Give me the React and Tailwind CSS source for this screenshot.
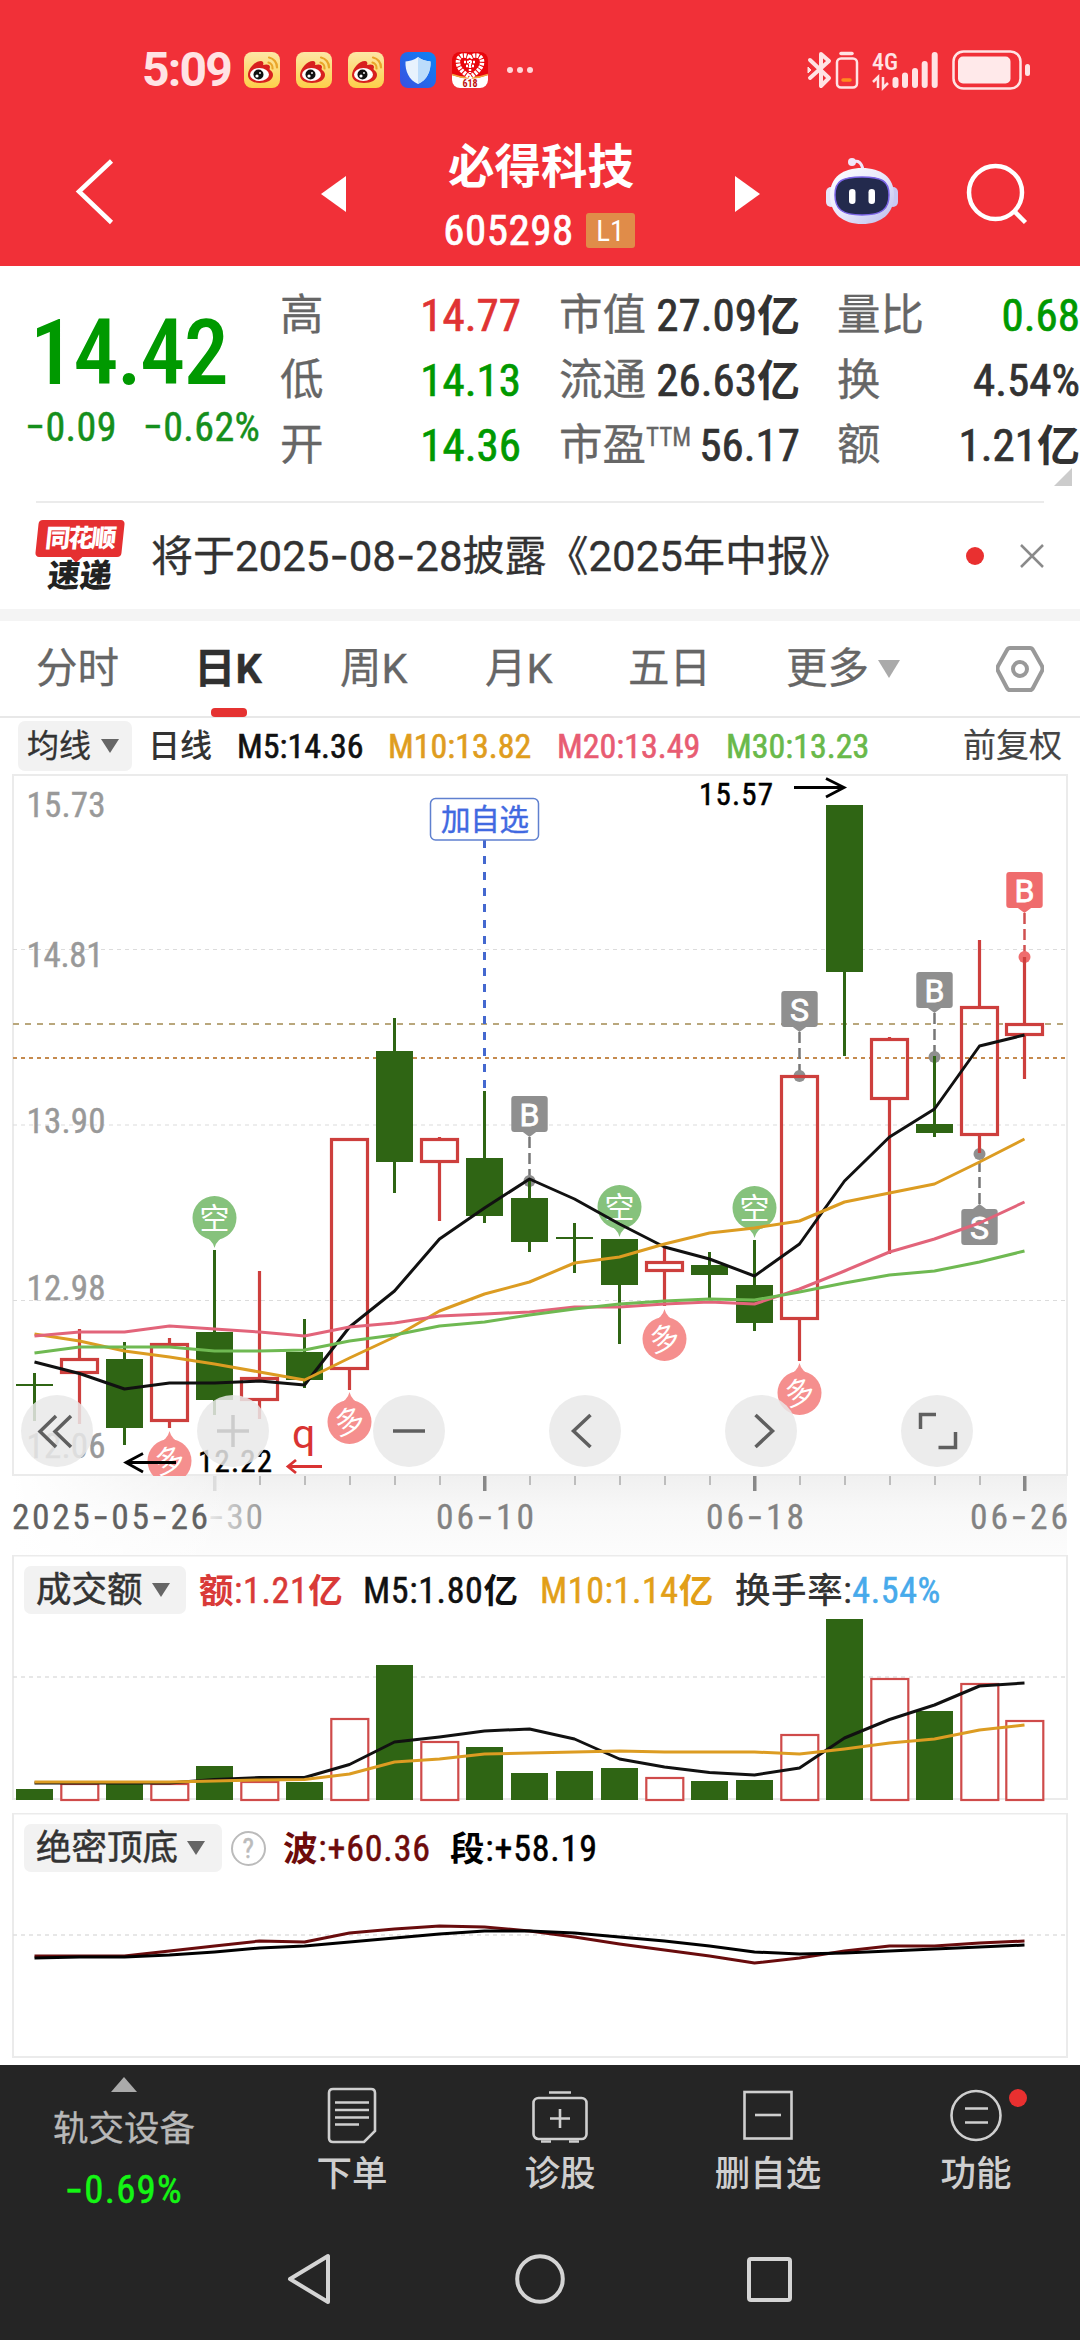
import React from 'react';

const GREEN = '#2f6514';
const RED = '#cd3f3d';

// x centre of the n-th trading day
const cx = (i) => 34.5 + i * 45;
const toPoints = (ys) => ys.map((y, i) => `${cx(i)},${y}`).join(' ');

// [direction, high, bodyTop, bodyBottom, low]
const candles = [
  ['down', 1373, 1384, 1386, 1421],
  ['up', 1329, 1358, 1374, 1424],
  ['down', 1342, 1359, 1428, 1445],
  ['up', 1338, 1343, 1422, 1428],
  ['down', 1250, 1332, 1400, 1415],
  ['up', 1271, 1377, 1401, 1419],
  ['down', 1319, 1352, 1380, 1388],
  ['up', 1138, 1138, 1370, 1390],
  ['down', 1018, 1051, 1162, 1193],
  ['up', 1137, 1138, 1163, 1221],
  ['down', 1091, 1158, 1216, 1223],
  ['down', 1180, 1198, 1242, 1252],
  ['down', 1223, 1237, 1239, 1273],
  ['down', 1239, 1239, 1285, 1344],
  ['up', 1247, 1261, 1272, 1306],
  ['down', 1252, 1265, 1275, 1300],
  ['down', 1240, 1285, 1323, 1331],
  ['up', 1075, 1075, 1320, 1361],
  ['down', 805, 805, 972, 1056],
  ['up', 1037, 1038, 1100, 1254],
  ['down', 1056, 1124, 1133, 1137],
  ['up', 940, 1006, 1136, 1153],
  ['up', 957, 1023, 1036, 1079],
];

const ma5 = [1362, 1373.5, 1389, 1383, 1383, 1381, 1385, 1327, 1291, 1239, 1208, 1179, 1199, 1224, 1247, 1259, 1276, 1244, 1181, 1137, 1109, 1046, 1035];
const ma10 = [1334, 1341, 1351, 1357, 1364, 1372, 1380, 1358, 1337, 1311, 1294, 1282, 1263, 1257, 1244, 1233, 1228, 1221, 1202, 1193, 1184, 1162, 1139];
const ma20 = [1336, 1332, 1332, 1326, 1329, 1332, 1336, 1327, 1323, 1316, 1314, 1312, 1307, 1307, 1304, 1302, 1304, 1289, 1271, 1252, 1239, 1223, 1202];
const ma30 = [1353, 1347, 1347, 1347, 1351, 1351, 1350, 1341, 1335, 1326, 1322, 1315, 1309, 1304, 1301, 1299, 1300, 1292, 1283, 1275, 1271, 1262, 1251];

const volumes = [1789, 1783, 1783, 1783, 1766, 1781, 1782, 1718, 1665, 1741, 1747, 1773, 1771, 1768, 1777, 1781, 1780, 1734, 1619, 1678, 1711, 1683, 1720];
const volMa5 = [1783, 1783, 1783, 1783, 1779.5, 1777.5, 1777.5, 1764.5, 1742, 1737, 1731, 1729, 1739, 1759, 1767, 1772.5, 1775, 1768, 1738, 1719.5, 1705, 1686, 1683];
const volMa10 = [1782, 1782, 1782, 1782, 1781, 1780, 1779.5, 1774, 1762, 1759, 1754, 1753, 1752, 1751, 1752, 1752, 1752, 1754, 1749, 1743, 1739, 1730, 1725];

const wave = [1956, 1956, 1956, 1951, 1946, 1941, 1942, 1933, 1929, 1926, 1927, 1931, 1937, 1944, 1950, 1956, 1963, 1958, 1951, 1946, 1946, 1943, 1941];
const segment = [1958, 1957, 1957, 1955, 1952, 1948, 1946, 1942, 1938, 1934, 1931, 1931, 1933, 1937, 1941, 1946, 1952, 1954, 1953, 1951, 1949, 1947, 1945];

const priceLabels = [
  { text: '15.73', y: 817, w: 77 },
  { text: '14.81', y: 967, w: 75 },
  { text: '13.90', y: 1133, w: 77 },
  { text: '12.98', y: 1300, w: 77 },
  { text: '12.06', y: 1458, w: 77 },
];

// Roboto's hyphen is very short, Inter's is about as wide as a digit
const wideDash = (text, Tag = 'span') =>
  text.split(/(-)/).map((part, i) => (part === '-' ? <Tag key={i} className="[font-family:Inter]">-</Tag> : part));

/* ---------- status bar ---------- */

const WeiboIcon = () => (
  <svg className="w-9 h-9" viewBox="0 0 36 36">
    <defs>
      <linearGradient id="wb" x1="0" y1="0" x2="0" y2="1">
        <stop offset="0" stopColor="#fde7a6" />
        <stop offset="1" stopColor="#fdcf49" />
      </linearGradient>
    </defs>
    <rect width="36" height="36" rx="8" fill="url(#wb)" />
    <path d="M4 23c0-6 7-14 13-14 2 0 3 2 2 4 3-1 7-1 7 2 0 1-1 2 0 3 2 1 3 3 3 5 0 5-6 8-13 8S4 28 4 23z" fill="#d8201f" />
    <ellipse cx="15.500" cy="22.500" rx="9.500" ry="6.500" fill="#fff" />
    <circle cx="14.500" cy="22.500" r="5" fill="#111" />
    <circle cx="13" cy="24" r="1.600" fill="#fff" />
    <circle cx="16" cy="21" r="0.900" fill="#fff" />
    <path d="M24.500 10.500a5.500 5.500 0 0 1 4 6M25 5.500a10 10 0 0 1 8 10" fill="none" stroke="#e9a52a" strokeWidth="2.200" strokeLinecap="round" />
  </svg>
);

const ShieldIcon = () => (
  <svg className="w-9 h-9" viewBox="0 0 36 36">
    <defs>
      <linearGradient id="sh" x1="1" y1="0" x2="0" y2="1">
        <stop offset="0" stopColor="#0a84f5" />
        <stop offset="1" stopColor="#3b4fe0" />
      </linearGradient>
    </defs>
    <rect width="36" height="36" rx="8" fill="url(#sh)" />
    <path d="M18 5c4 3 8 4 12.500 4.500C31 19 27 28 18 32 9 28 5 19 5.500 9.500 10 9 14 8 18 5z" fill="#e8f2fd" />
    <path d="M18 5c4 3 8 4 12.500 4.500C31 19 27 28 18 32z" fill="#bcdcfb" />
  </svg>
);

const HeartIcon = () => (
  <svg className="w-9 h-9" viewBox="0 0 36 36">
    <defs>
      <clipPath id="hc">
        <rect width="36" height="36" rx="8" />
      </clipPath>
    </defs>
    <g clipPath="url(#hc)">
      <rect width="36" height="36" fill="#e9060c" />
      <path d="M0 23q18 7 36 0v13H0z" fill="#fff" />
      <path d="M0 22.500q18 7 36 0" fill="none" stroke="#f3a33c" strokeWidth="1.500" />
      <path d="M18 6c3-4 13-4 12 5-.5 6-7 11-12 14C13 22 6.500 17 6 11 5 2 15 2 18 6z" fill="none" stroke="#fff" strokeWidth="4.500" strokeDasharray="2.500 1" />
      <path d="M12 10h12M14 14h8M18 8v13" stroke="#fff" strokeWidth="2.500" strokeDasharray="2 1" />
      <text x="18" y="34.500" textAnchor="middle" fontSize="10" fontWeight="700" fill="#c01010">618</text>
    </g>
  </svg>
);

const StatusBar = () => (
  <div className="flex items-center h-[140px] pl-[142px] pr-[50px] text-[#ffe3e4]">
    <span className="w-[102px] text-[48px] leading-none font-bold tracking-[-1.8px] font-stretch-100%">5:09</span>
    <div className="flex gap-4">
      <WeiboIcon />
      <WeiboIcon />
      <WeiboIcon />
      <ShieldIcon />
      <HeartIcon />
    </div>
    <div className="flex gap-1 ml-[19px]">
      <i className="size-[6px] rounded-full bg-[#ffd6d8]" />
      <i className="size-[6px] rounded-full bg-[#ffd6d8]" />
      <i className="size-[6px] rounded-full bg-[#ffd6d8]" />
    </div>
    <svg className="ml-auto w-[224px] h-[44px]" viewBox="806 47 224 44" fill="none" stroke="#ffe3e4">
      <path d="M810 59l19 18-8 8V53l8 7-19 17" strokeWidth="4" strokeLinejoin="round" strokeLinecap="round" />
      <path d="M808 66l3 3-3 3z" strokeWidth="1" fill="#ffe3e4" />
      <rect x="837" y="57.500" width="20" height="29" rx="4" strokeWidth="2.500" />
      <path d="M841 52.500h11" strokeWidth="3.500" strokeLinecap="round" />
      <path d="M843 79h7" stroke="#ff8a1e" strokeWidth="3.500" strokeLinecap="round" />
      <text x="872" y="69" fontSize="24" fontWeight="500" textLength="26" lengthAdjust="spacingAndGlyphs" fill="#ffe3e4" stroke="none">4G</text>
      <path d="M873 81l5-5v11M883 76v11l5-5" strokeWidth="2.500" />
      <path d="M895.500 79v5M905 74.500v9.500M915 70v14M924.700 63v21M934.700 54v30" strokeWidth="6" strokeLinecap="round" />
      <rect x="953.500" y="50.500" width="67" height="37" rx="10" strokeWidth="2.500" />
      <rect x="958" y="55.500" width="52.500" height="27" rx="5" fill="#ffe9ea" stroke="none" />
      <rect x="1025" y="63" width="5" height="12" rx="2.500" fill="#ffe3e4" stroke="none" />
    </svg>
  </div>
);

/* ---------- title bar ---------- */

const RobotIcon = () => (
  <svg className="w-[74px] h-[70px]" viewBox="824 156 74 70">
    <defs>
      <linearGradient id="rb" x1="0" y1="0" x2="1" y2="1">
        <stop offset="0" stopColor="#ffffff" />
        <stop offset="0.500" stopColor="#e9e8fb" />
        <stop offset="1" stopColor="#b9bcec" />
      </linearGradient>
    </defs>
    <path d="M852 162q8-3 10 8" fill="none" stroke="#f1e6fa" strokeWidth="3" />
    <circle cx="851" cy="162" r="4" fill="#f1e6fa" />
    <rect x="825" y="187" width="10" height="20" rx="5" fill="#e6e6fa" />
    <rect x="887" y="187" width="10" height="20" rx="5" fill="#c9c8f2" />
    <path d="M861 168c19 0 32 9 32 27 0 19-13 29-32 29s-32-10-32-29c0-18 13-27 32-27z" fill="url(#rb)" />
    <path d="M861 177c20 0 27 4 27 18s-7 20-27 20-27-6-27-20 7-18 27-18z" fill="#232a4d" stroke="#7a63e6" strokeWidth="1.500" />
    <rect x="848" y="189" width="6.500" height="15" rx="3.200" fill="#fff" />
    <rect x="867.500" y="189" width="6.500" height="15" rx="3.200" fill="#fff" />
  </svg>
);

const TitleBar = () => (
  <div className="flex items-start h-[126px]">
    <svg className="w-10 h-[68px] ml-[75px] mt-[18px]" viewBox="75 158 40 68" fill="none" stroke="#fff" strokeWidth="4.500">
      <path d="M111.500 161L79 191.500l32.500 31" />
    </svg>
    <svg className="w-[25px] h-9 ml-[206px] mt-9" viewBox="0 0 25 36">
      <path d="M25 0v36L0 18z" fill="#fff" />
    </svg>
    <div className="w-[390px] flex flex-col items-center text-white">
      <h1 className="h-[54px] leading-[54px] text-[46.5px] font-bold whitespace-nowrap">必得科技</h1>
      <div className="flex items-center gap-3 mt-[13px] -ml-1 h-[46px]">
        <span className="text-[43px] leading-[46px] tracking-[0.5px] [-webkit-text-stroke:0.7px]">605298</span>
        <span className="w-[49px] h-[35px] rounded-[3px] bg-[#e08c49] text-[29px] leading-[36px] text-center">L1</span>
      </div>
    </div>
    <svg className="w-[25px] h-9 mt-9 -ml-px" viewBox="0 0 25 36">
      <path d="M0 0v36l25-18z" fill="#fff" />
    </svg>
    <div className="ml-[65px] mt-4">
      <RobotIcon />
    </div>
    <svg className="w-[62px] h-[62px] ml-[67px] mt-[23px]" viewBox="965 163 62 62" fill="none" stroke="#fff" strokeWidth="4.500">
      <circle cx="994.500" cy="192.500" r="26.500" />
      <path d="M1013 211l11.500 11.500" />
    </svg>
  </div>
);

/* ---------- quote ---------- */

const QuoteRow = ({ label, sup, value, tone = 'text-[#323232]' }) => (
  <div className="flex items-center justify-between h-[65px] whitespace-nowrap">
    <span className="text-[43.5px] leading-[65px] text-[#666] [-webkit-text-stroke:0.3px]">
      {label}
      {sup && <span className="inline-block align-top text-[25px] leading-[50px]">{sup}</span>}
    </span>
    <span className={`text-[45px] leading-[65px] [-webkit-text-stroke:0.7px] ${tone}`}>{value}</span>
  </div>
);

const Yi = () => <b className="font-bold text-[43px] [-webkit-text-stroke:0px]">亿</b>;

const Quote = () => (
  <section className="relative flex h-[235px] pt-[17px] bg-white">
    <div className="w-[280px] pt-[25px] text-[#009900]">
      <div className="pl-[30px] h-[92px] leading-[92px] text-[90px] font-medium tracking-[-1.6px]">14.42</div>
      <div className="flex gap-[26px] pl-[25px] mt-[3px] h-[50px] leading-[50px] text-[40px] tracking-[0.4px] whitespace-nowrap text-[#158f1c] [-webkit-text-stroke:0.5px]">
        <span>−0.09</span>
        <span>−0.62%</span>
      </div>
    </div>
    <div className="w-[241px]">
      <QuoteRow label="高" value="14.77" tone="text-[#e03333]" />
      <QuoteRow label="低" value="14.13" tone="text-[#009900]" />
      <QuoteRow label="开" value="14.36" tone="text-[#009900]" />
    </div>
    <div className="w-[241px] ml-[38px]">
      <QuoteRow label="市值" value={<>27.09<Yi /></>} />
      <QuoteRow label="流通" value={<>26.63<Yi /></>} />
      <QuoteRow label="市盈" sup="TTM" value="56.17" />
    </div>
    <div className="w-[243px] ml-[37px]">
      <QuoteRow label="量比" value="0.68" tone="text-[#009900]" />
      <QuoteRow label="换" value="4.54%" />
      <QuoteRow label="额" value={<>1.21<Yi /></>} />
    </div>
    <svg className="absolute right-2 top-[202px] w-[18px] h-[18px]" viewBox="0 0 18 18">
      <path d="M18 0v18H0z" fill="#ccc" />
    </svg>
  </section>
);

/* ---------- notice ---------- */

const Notice = () => (
  <section className="bg-white border-b-[12px] border-[#f4f4f4] h-[120px] px-9">
    <div className="flex items-center h-[108px] border-t-2 border-[#ebebeb]">
      <div className="w-[88px] flex flex-col items-center">
        <div className="relative w-[86px] h-[37px] rounded-[4px] bg-[#e53031] -skew-x-6 text-white text-[25px] font-black leading-[37px] text-center tracking-[-2px]">
          同花顺
          <i className="absolute left-[37px] -bottom-[4px] size-[9px] rotate-45 bg-[#e53031]" />
        </div>
        <div className="h-[34px] mt-[2px] -skew-x-6 text-[#222] text-[32px] font-black leading-[34px]">速递</div>
      </div>
      <p className="ml-[27px] text-[42px] leading-[60px] text-[#323232] whitespace-nowrap font-stretch-100% [-webkit-text-stroke:0.3px]">
        {wideDash('将于2025-08-28披露《2025年中报》')}
      </p>
      <i className="ml-auto size-[18px] rounded-full bg-[#e93030]" />
      <svg className="ml-[36px] w-6 h-6" viewBox="0 0 24 24" stroke="#8a8a8a" strokeWidth="2.500">
        <path d="M1 1l22 22M23 1L1 23" />
      </svg>
    </div>
  </section>
);

/* ---------- period tabs ---------- */

const Tabs = () => (
  <nav className="flex items-center h-[97px] border-b-2 border-[#e8e8e8] bg-white text-[41.5px] text-[#666] whitespace-nowrap leading-[98px] [-webkit-text-stroke:0.3px]">
    <span className="w-[159px] pl-9">分时</span>
    <span className="relative w-[145px] pl-[35px] text-[#303030] font-bold font-stretch-100%">
      日K
      <i className="absolute left-[52px] bottom-[1px] w-9 h-[9px] rounded-[4px] bg-[#e53231]" />
    </span>
    <span className="w-[145px] pl-9 font-stretch-100%">周K</span>
    <span className="w-[143px] pl-9 font-stretch-100%">月K</span>
    <span className="w-[158px] pl-9">五日</span>
    <span className="pl-9">更多</span>
    <svg className="ml-[9px] w-[22px] h-[18px]" viewBox="0 0 22 18">
      <path d="M0 0h22L11 18z" fill="#aaa" />
    </svg>
    <svg className="ml-auto mr-9 w-[48px] h-[46px]" viewBox="0 0 48 46" fill="none" stroke="#999" strokeWidth="4">
      <path d="M14 2h20q2 0 3 2l9 16q1 2.500 0 5l-9 17q-1 2-3 2H14q-2 0-3-2L2 25q-1-2.500 0-5l9-16q1-2 3-2z" />
      <circle cx="24" cy="23" r="7" />
    </svg>
  </nav>
);

/* ---------- legends ---------- */

const Caret = () => (
  <svg className="w-[18px] h-[14px]" viewBox="0 0 18 14">
    <path d="M0 0h18L9 14z" fill="#666" />
  </svg>
);

const MaLegend = () => (
  <div className="flex items-center h-[56px] pl-[18px] pr-[18px] bg-white text-[34px] leading-[50px] whitespace-nowrap [-webkit-text-stroke:0.6px]">
    <span className="flex items-center gap-[10px] w-[114px] h-[50px] pl-[9px] rounded-[7px] bg-[#f2f2f2] text-[32px] text-[#333] [-webkit-text-stroke:0.3px]">
      均线 <Caret />
    </span>
    <span className="w-[90px] pl-[16px] text-[32px] text-[#333] font-medium [-webkit-text-stroke:0px]">日线</span>
    <span className="w-[151px] pl-[15px] text-[#111]">M5:14.36</span>
    <span className="w-[169px] pl-[15px] text-[#df9d1e]">M10:13.82</span>
    <span className="w-[169px] pl-[15px] text-[#e85c72]">M20:13.49</span>
    <span className="w-[169px] pl-[15px] text-[#69b94a]">M30:13.23</span>
    <span className="ml-auto text-[33px] text-[#444] [-webkit-text-stroke:0.2px]">前复权</span>
  </div>
);

/* ---------- main chart ---------- */

const Candle = ({ data, i }) => {
  const [dir, high, top, bottom, low] = data;
  const x = cx(i);
  if (dir === 'up') {
    return (
      <g stroke={RED} strokeWidth="3.200" fill="none">
        <path d={`M${x} ${high}V${top + 1}M${x} ${bottom - 1}V${low}`} />
        <rect x={x - 18} y={top + 1.5} width="36" height={bottom - top - 3} />
      </g>
    );
  }
  return (
    <g fill={GREEN}>
      <rect x={x - 1.5} y={high} width="3" height={low - high} />
      <rect x={x - 18.5} y={top} width="37" height={bottom - top} />
    </g>
  );
};

// round 空 / 多 signal with a small tip towards the candle
const Signal = ({ i, y, kind }) => {
  const x = cx(i);
  const up = kind === '多';
  const s = up ? -1 : 1;
  return (
    <g>
      <path d={`M${x - 13} ${y + s * 17}Q${x - 2} ${y + s * 21} ${x} ${y + s * 30}Q${x + 2} ${y + s * 21} ${x + 13} ${y + s * 17}z`} fill={up ? '#f58f8e' : '#86c27c'} />
      <circle cx={x} cy={y} r="22" fill={up ? '#f58f8e' : '#86c27c'} />
      <text x={x} y={y + 10.5} textAnchor="middle" fontSize="30" fill="#fff" transform={up ? `rotate(-14 ${x} ${y})` : undefined}>
        {kind}
      </text>
    </g>
  );
};

// B / S trade flag, dot marks the price it belongs to
const Flag = ({ i, top, dot, text, color = '#8f8f8f', line = '#777' }) => {
  const x = cx(i);
  const below = dot < top;
  const tip = below ? top - 5 : top + 41;
  const edge = below ? top + 1 : top + 35;
  return (
    <g>
      <path d={`M${x} ${tip}V${dot}`} stroke={line} strokeWidth="2.500" strokeDasharray="11 5" />
      <circle cx={x} cy={dot} r="6" fill={color} />
      <rect x={x - 18.2} y={top} width="36.400" height="36" rx="3" fill={color} />
      <path d={`M${x - 8} ${edge}L${x} ${tip}L${x + 8} ${edge}z`} fill={color} />
      <text x={x} y={top + 29.5} textAnchor="middle" fontSize="32" fill="#fff" stroke="#fff" strokeWidth="0.800" className="font-stretch-100%">
        {text}
      </text>
    </g>
  );
};

const MainChart = () => (
  <svg className="block w-[1080px] h-[781px]" viewBox="0 774 1080 781">
    <defs>
      <linearGradient id="axis" x1="0" y1="0" x2="0" y2="1">
        <stop offset="0" stopColor="#f0f0f0" />
        <stop offset="0.450" stopColor="#f8f8f8" />
        <stop offset="1" stopColor="#fcfcfc" />
      </linearGradient>
      <linearGradient id="fade" x1="0" y1="0" x2="1" y2="0">
        <stop offset="0" stopColor="#fff" />
        <stop offset="1" stopColor="#fff" stopOpacity="0" />
      </linearGradient>
      <linearGradient id="date" gradientUnits="userSpaceOnUse" x1="205" y1="0" x2="262" y2="0">
        <stop offset="0" stopColor="#eee" />
        <stop offset="1" stopColor="#999" />
      </linearGradient>
      <clipPath id="plot">
        <rect x="12" y="774" width="1056" height="702" />
      </clipPath>
    </defs>

    <rect x="13" y="1476" width="1054" height="79" fill="url(#axis)" />
    <rect x="13" y="1476" width="220" height="79" fill="url(#fade)" />
    <rect x="13" y="775" width="1054" height="700" fill="#fff" stroke="#ebebeb" strokeWidth="2" />

    <path d="M13 949.500H1067M13 1125H1067M13 1300.500H1067" stroke="#dcdcdc" strokeWidth="1.200" strokeDasharray="4 4" />
    <path d="M13 1024H1067" stroke="#b9a77c" strokeWidth="1.800" strokeDasharray="6 6" />
    <path d="M13 1058H1067" stroke="#c58a4e" strokeWidth="1.800" strokeDasharray="4 4" />

    <g fill="#999" fontSize="35" stroke="#999" strokeWidth="0.400">
      {priceLabels.map((p) => (
        <text key={p.text} x="26.500" y={p.y} textLength={p.w + 2}>{p.text}</text>
      ))}
    </g>

    <g clipPath="url(#plot)">
      <Signal i={4} y={1218} kind="空" />
      <Signal i={13} y={1207} kind="空" />
      <Signal i={16} y={1208} kind="空" />
      <Signal i={3} y={1461} kind="多" />
      <Signal i={7} y={1422} kind="多" />
      <Signal i={14} y={1339} kind="多" />
      <Signal i={17} y={1393} kind="多" />

      <Flag i={11} top={1096} dot={1181} text="B" />
      <Flag i={17} top={991} dot={1076} text="S" />
      <Flag i={20} top={972} dot={1057} text="B" />
      <Flag i={21} top={1209} dot={1154} text="S" />
      <Flag i={22} top={872} dot={957} text="B" color="#ef6c6d" line="#d05050" />

      {candles.map((c, i) => (
        <Candle key={i} data={c} i={i} />
      ))}

      <g fill="none" strokeWidth="3" strokeLinejoin="round">
        <polyline points={toPoints(ma5)} stroke="#111" />
        <polyline points={toPoints(ma10)} stroke="#dc9c22" />
        <polyline points={toPoints(ma20)} stroke="#e2647a" />
        <polyline points={toPoints(ma30)} stroke="#6fb952" />
      </g>
    </g>

    <path d="M484.500 840V1090" stroke="#4468cf" strokeWidth="3" strokeDasharray="8 8" />
    <rect x="430.500" y="798.500" width="108" height="41.500" rx="5" fill="#fff" stroke="#5f80cf" strokeWidth="1.500" />
    <text x="441" y="829.500" fontSize="29.500" fill="#4169e1" textLength="88" stroke="#4169e1" strokeWidth="0.400">加自选</text>

    <g fill="#000" stroke="none" fontSize="31">
      <text x="699" y="805" textLength="74" stroke="#000" strokeWidth="0.500">15.57</text>
      <text x="198" y="1472" textLength="74" stroke="#000" strokeWidth="0.500">12.22</text>
      <path d="M794 787.500H844M826 778.500L844 787.500L826 797" stroke="#000" strokeWidth="2.800" fill="none" />
      <path d="M176 1462.500H126M143 1453.500L126 1462.500L143 1472" stroke="#000" strokeWidth="2.800" fill="none" />
    </g>
    <text x="292" y="1448" fontSize="41" fill="#d93332" className="font-stretch-100%">q</text>
    <path d="M322 1466.500H288M296 1460L288 1466.500L296 1473" stroke="#d93332" strokeWidth="2.800" fill="none" />

    {candles.map((_, i) => {
      if (i < 4) return null;
      const major = (i - 4) % 6 === 0;
      if (major) {
        return <rect key={i} x={cx(i) - 1.5} y="1476" width="3.500" height="15" fill={i === 4 ? '#ddd' : '#888'} />;
      }
      return <rect key={i} x={cx(i) - 0.5} y="1476" width="2" height="9" fill="#bdbdbd" />;
    })}

    <g fontSize="35.500" fill="#828282" stroke="#828282" strokeWidth="0.300">
      <text x="12" y="1528.500" textLength="196" fill="#626262" stroke="#626262">{wideDash('2025-05-26', 'tspan')}</text>
      <text x="208" y="1528.500" textLength="55" fill="url(#date)" stroke="none">{wideDash('-30', 'tspan')}</text>
      <text x="436" y="1528.500" textLength="98">{wideDash('06-10', 'tspan')}</text>
      <text x="706" y="1528.500" textLength="98">{wideDash('06-18', 'tspan')}</text>
      <text x="970" y="1528.500" textLength="98">{wideDash('06-26', 'tspan')}</text>
    </g>
  </svg>
);

const buttons = [
  'M56 1416l-16 15.500 16 15.500M71 1416l-16 15.500 16 15.500',
  'M217 1431H249M233 1415V1447',
  'M393 1431H425',
  'M590.500 1415l-17 16 17 16',
  'M755.500 1415l17 16-17 16',
  'M920.500 1429V1414.500H936M955.500 1432V1447.500H938.500',
];

const ChartButtons = () => (
  <div className="absolute left-[21px] top-[621px] flex gap-[104px]">
    {buttons.map((d, i) => (
      <button key={d} type="button" className="size-[72px] rounded-full bg-[#e9e9e9]/85">
        <svg viewBox={`${21 + i * 176} 1395 72 72`} fill="none" stroke={i === 1 ? '#ccc' : '#5f5f5f'} strokeWidth="3.500">
          <path d={d} />
        </svg>
      </button>
    ))}
  </div>
);

/* ---------- volume + indicator ---------- */

const Zh = ({ children }) => <b className="font-bold text-[34.5px] [-webkit-text-stroke:0px]">{children}</b>;

const Volume = () => (
  <section className="relative h-[258px] bg-white">
    <svg className="block w-[1080px] h-[258px]" viewBox="0 1555 1080 258">
      <rect x="13" y="1555.500" width="1054" height="243.500" fill="#fff" stroke="#ebebeb" strokeWidth="2" />
      <path d="M13 1677H1067" stroke="#e0e0e0" strokeWidth="1.500" strokeDasharray="4 4" />
      {volumes.map((y, i) => (
        candles[i][0] === 'up' ? (
          <rect key={i} x={cx(i) - 18.2} y={y + 1} width="37" height={1799 - y} fill="#fff" stroke="#cf4b4a" strokeWidth="2.200" />
        ) : (
          <rect key={i} x={cx(i) - 18.5} y={y} width="37" height={1800 - y} fill={GREEN} />
        )
      ))}
      <g fill="none" strokeWidth="3" strokeLinejoin="round">
        <polyline points={toPoints(volMa5)} stroke="#111" />
        <polyline points={toPoints(volMa10)} stroke="#dc9c22" />
      </g>
    </svg>
    <div className="absolute left-6 top-[12px] flex items-center h-12 text-[36px] leading-[48px] tracking-[0.6px] whitespace-nowrap [-webkit-text-stroke:0.5px]">
      <span className="flex items-center gap-[9px] w-[162px] h-12 pl-[12px] -mt-0.5 rounded-[7px] bg-[#f2f2f2] text-[35.500px] tracking-normal text-[#333]">
        成交额 <Caret />
      </span>
      <span className="w-[153px] pl-[13px] text-[#d93a38]"><Zh>额</Zh>:1.21<Zh>亿</Zh></span>
      <span className="w-[177px] pl-[24px] text-[#111]">M5:1.80<Zh>亿</Zh></span>
      <span className="w-[196px] pl-[24px] text-[#e29f18]">M10:1.14<Zh>亿</Zh></span>
      <span className="pl-[23px] text-[#333]"><b className="font-medium text-[35.5px] [-webkit-text-stroke:0px]">换手率</b>:<span className="text-[#47aaeb]">4.54%</span></span>
    </div>
  </section>
);

const Indicator = () => (
  <section className="relative h-[252px] bg-white">
    <svg className="block w-[1080px] h-[252px]" viewBox="0 1813 1080 252">
      <rect x="13" y="1813.500" width="1054" height="243.500" fill="#fff" stroke="#ebebeb" strokeWidth="2" />
      <path d="M13 1935H1067" stroke="#e0e0e0" strokeWidth="1.500" strokeDasharray="4 4" />
      <g fill="none" strokeWidth="3" strokeLinejoin="round">
        <polyline points={toPoints(wave)} stroke="#690c0d" />
        <polyline points={toPoints(segment)} stroke="#000" />
      </g>
    </svg>
    <div className="absolute left-6 top-[12px] flex items-center h-12 text-[36px] leading-[48px] tracking-[0.8px] whitespace-nowrap [-webkit-text-stroke:0.5px]">
      <span className="flex items-center gap-[9px] w-[198px] h-12 pl-[12px] -mt-0.5 rounded-[7px] bg-[#f2f2f2] text-[35.500px] tracking-normal text-[#333]">
        绝密顶底 <Caret />
      </span>
      <span className="ml-[9px] size-[35px] -mt-0.5 rounded-full border-2 border-[#bbb] text-[#bbb] text-[27px] leading-[32px] text-center">?</span>
      <span className="w-[184px] pl-[17px] text-[#6d0b0b]"><Zh>波</Zh>:+60.36</span>
      <span className="text-black"><Zh>段</Zh>:+58.19</span>
    </div>
  </section>
);

/* ---------- bottom bars ---------- */

const actions = [
  {
    label: '下单',
    icon: (
      <>
        <path d="M9 2h38q4 0 4 4v38l-11 11H9q-4 0-4-4V6q0-4 4-4z" />
        <path d="M11 15.500h34M11 23h34M11 30.500h34M11 37.500h24" />
      </>
    ),
  },
  {
    label: '诊股',
    icon: (
      <>
        <rect x="1.500" y="11" width="53" height="41" rx="5" />
        <path d="M17 5.500h22M28 22v19M18 31.500h20M9 54.500h10M37 54.500h10" />
      </>
    ),
  },
  {
    label: '删自选',
    icon: (
      <>
        <rect x="4.500" y="5" width="47" height="46.500" />
        <path d="M15 28h26" />
      </>
    ),
  },
  {
    label: '功能',
    dot: true,
    icon: (
      <>
        <circle cx="28" cy="28.500" r="24.500" />
        <path d="M17 21.500h23M17 35.500h23" />
      </>
    ),
  },
];

const ActionBar = () => (
  <footer className="flex h-[155px] bg-[#252525] text-[#cfcfcf] text-[35.5px] whitespace-nowrap">
    <div className="w-[248px] flex flex-col items-center text-[#b8b8b8]">
      <svg className="w-[26px] h-[15px] mt-3" viewBox="0 0 26 15">
        <path d="M13 0l13 15H0z" fill="#aaa" />
      </svg>
      <span className="mt-[12px] h-[50px] leading-[50px] [-webkit-text-stroke:0.3px]">轨交设备</span>
      <span className="mt-[12px] h-[46px] leading-[46px] text-[39px] tracking-[1.2px] text-[#14f514] [-webkit-text-stroke:0.5px]">
        {wideDash('-0.69%')}
      </span>
    </div>
    {actions.map((a) => (
      <div key={a.label} className="relative w-52 flex flex-col items-center">
        <svg className="w-[56px] h-[57px] mt-[22px]" viewBox="0 0 56 57" fill="none" stroke="#cfcfcf" strokeWidth="2.600">
          {a.icon}
        </svg>
        <span className="mt-[5px] h-[50px] leading-[50px] font-medium">{a.label}</span>
        {a.dot && <i className="absolute left-[137px] top-[24px] size-[18px] rounded-full bg-[#e93030]" />}
      </div>
    ))}
  </footer>
);

const SystemNav = () => (
  <div className="flex justify-center gap-[180px] h-[120px] pt-[33px] bg-[#252525]">
    <svg className="w-[50px] h-[52px]" viewBox="0 0 50 52" fill="none" stroke="#d4d4d4" strokeWidth="4" strokeLinejoin="round">
      <path d="M43 3v46L5 26z" />
    </svg>
    <svg className="w-[50px] h-[52px]" viewBox="0 0 50 52" fill="none" stroke="#d4d4d4" strokeWidth="4">
      <circle cx="25" cy="26" r="22.800" />
    </svg>
    <svg className="w-[50px] h-[52px]" viewBox="0 0 50 52" fill="none" stroke="#d4d4d4" strokeWidth="4">
      <rect x="4" y="6" width="41" height="41" rx="2" />
    </svg>
  </div>
);

const App = () => {
  return (
    <div className="w-[1080px] h-[2340px] overflow-hidden bg-white [font-family:Roboto,'Noto_Sans_CJK_SC',sans-serif] font-stretch-75%">
      <header className="h-[266px] bg-[#f13038]">
        <StatusBar />
        <TitleBar />
      </header>
      <Quote />
      <Notice />
      <Tabs />
      <MaLegend />
      <div className="relative h-[781px]">
        <MainChart />
        <ChartButtons />
      </div>
      <Volume />
      <Indicator />
      <ActionBar />
      <SystemNav />
    </div>
  );
};

export default App;
